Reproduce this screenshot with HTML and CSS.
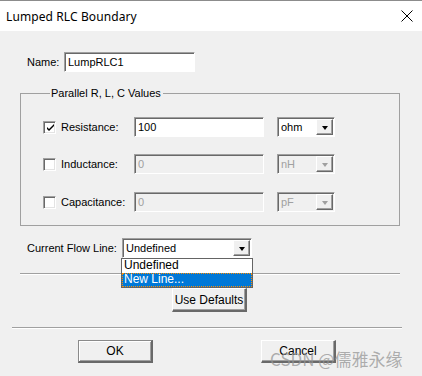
FILE: index.html
```html
<!DOCTYPE html>
<html>
<head>
<meta charset="utf-8">
<link rel="stylesheet" href="styles.css">
</head>
<body>
<div class="dialog">
  <div class="titlebar">
    <span class="title">Lumped RLC Boundary</span>
    <svg class="close" width="12" height="12" viewBox="0 0 12 12"><path d="M0.5 0.5 L11.5 11.5 M11.5 0.5 L0.5 11.5" stroke="#000" stroke-width="1" fill="none"/></svg>
  </div>
  <div class="content">
    <div class="name-row">
      <span class="name-label">Name:</span>
      <div class="field name-field">LumpRLC1</div>
    </div>
    <fieldset class="group">
      <legend>Parallel R, L, C Values</legend>
      <div class="vrow r1">
        <span class="cb checked"><svg width="9" height="9" viewBox="0 0 9 9"><path d="M1 4 L3 6 L8 1 L8 3 L3 8 L1 6 Z" fill="#000"/></svg></span>
        <span class="vlabel">Resistance:</span>
        <div class="field val">100</div>
        <div class="combo unit"><span class="ctext">ohm</span><span class="dbtn"><i class="tri"></i></span></div>
      </div>
      <div class="vrow r2">
        <span class="cb"></span>
        <span class="vlabel">Inductance:</span>
        <div class="field val disabled">0</div>
        <div class="combo unit disabled"><span class="ctext">nH</span><span class="dbtn"><i class="tri"></i></span></div>
      </div>
      <div class="vrow r3">
        <span class="cb"></span>
        <span class="vlabel">Capacitance:</span>
        <div class="field val disabled">0</div>
        <div class="combo unit disabled"><span class="ctext">pF</span><span class="dbtn"><i class="tri"></i></span></div>
      </div>
    </fieldset>
    <div class="flow-row">
      <span class="flow-label">Current Flow Line:</span>
      <div class="combo flow">
        <span class="ctext">Undefined</span><span class="dbtn"><i class="tri"></i></span>
        <div class="droplist">
          <div class="item">Undefined</div>
          <div class="item sel">New Line...</div>
        </div>
      </div>
    </div>
    <div class="sep sep1"></div>
    <div class="defaults-row"><button class="btn defaults">Use Defaults</button></div>
    <div class="sep sep2"></div>
    <div class="bottom-row">
      <button class="btn ok">OK</button>
      <button class="btn cancel">Cancel</button>
      <span class="watermark">CSDN @儒雅永缘</span>
    </div>
  </div>
</div>
</body>
</html>
```
FILE: styles.css
```css
* { box-sizing: border-box; }
html, body { margin: 0; padding: 0; }
body { width: 422px; height: 376px; overflow: hidden; background: #f0f0f0; }
.dialog { width: 422px; height: 376px; background: #f0f0f0; font-family: "Liberation Sans", Arial, sans-serif; font-size: 11px; color: #000; }
.titlebar { height: 31px; background: #fff; border-top: 1px solid #8c8c8c; display: flex; align-items: center; justify-content: space-between; padding: 0 9px 0 6px; }
.title { font-family: "Noto Sans", "Open Sans", sans-serif; font-size: 12px; color: #000; letter-spacing: 0.1px; }
.close { display: block; margin-top: 0; }
.content { position: relative; }
.name-row { display: flex; align-items: center; height: 20px; margin-top: 21px; padding-left: 27px; }
.name-label { width: 37px; }
.field { height: 20px; background: #fff; border-top: 1px solid #a0a0a0; border-left: 1px solid #a0a0a0; border-right: 1px solid #fff; border-bottom: 1px solid #fff; box-shadow: inset 1px 1px 0 #696969, 0 0 0 0 transparent; padding: 2px 0 0 3px; line-height: 15px; white-space: nowrap; overflow: hidden; }
.name-field { width: 131px; }
.group { margin: 14px 0 0 20px; width: 380px; border: 1px solid #a0a0a0; padding: 0 0 13px 22px; min-width: 0; }
.group legend { padding: 0 2px 0 1px; margin-left: 7px; line-height: 14px; height: 14px; }
.vrow { display: flex; align-items: center; height: 20px; }
.r1 { margin-top: 17px; }
.r2 { margin-top: 17px; }
.r3 { margin-top: 18px; }
.cb { width: 13px; height: 13px; background: #fff; border-top: 1px solid #a0a0a0; border-left: 1px solid #a0a0a0; border-right: 1px solid #fff; border-bottom: 1px solid #fff; box-shadow: inset 1px 1px 0 #696969, inset -1px -1px 0 #e3e3e3; display: flex; align-items: center; justify-content: center; }
.cb svg { display: block; margin: 1px 0 0 1px; }
.vlabel { margin-left: 5px; width: 73px; }
.val { width: 130px; }
.field.disabled { background: #f0f0f0; color: #a0a0a0; }
.combo { position: relative; height: 20px; background: #fff; border-top: 1px solid #a0a0a0; border-left: 1px solid #a0a0a0; border-right: 1px solid #fff; border-bottom: 1px solid #fff; box-shadow: inset 1px 1px 0 #696969; display: flex; align-items: stretch; }
.unit { width: 58px; margin-left: 13px; }
.combo .ctext { flex: 1; padding: 2px 0 0 3px; line-height: 15px; white-space: nowrap; }
.combo .dbtn { width: 17px; margin: 1px 1px 1px 0; background: #f0f0f0; border-top: 1px solid #fff; border-left: 1px solid #fff; border-right: 1px solid #696969; border-bottom: 1px solid #696969; box-shadow: inset -1px -1px 0 #a0a0a0; display: flex; align-items: center; justify-content: center; }
.tri { display: block; width: 0; height: 0; border-left: 3.5px solid transparent; border-right: 3.5px solid transparent; border-top: 4px solid #000; margin: 1px 0 0 0; }
.combo.disabled { background: #f0f0f0; color: #a0a0a0; }
.combo.disabled .tri { border-top-color: #a0a0a0; }
.flow-row { display: flex; align-items: center; height: 20px; margin-top: 12px; padding-left: 27px; }
.flow-label { width: 95px; }
.flow { width: 130px; }
.droplist { position: absolute; top: 19px; left: -2px; width: 132px; height: 30px; background: #fff; border: 1px solid #646464; z-index: 5; }
.item { height: 14px; line-height: 13px; padding-left: 2px; font-size: 12px; }
.item.sel { background: #0078d7; color: #fff; outline: 1px dotted #ff8c00; outline-offset: -1px; }
.sep { height: 2px; border-top: 1px solid #a0a0a0; border-bottom: 1px solid #fff; }
.sep1 { margin: 15px 0 0 20px; width: 380px; }
.defaults-row { display: flex; margin-top: 13px; padding-left: 172px; }
.btn { font-family: "Liberation Sans", Arial, sans-serif; font-size: 12px; color: #000; background: #f0f0f0; border-top: 1px solid #fff; border-left: 1px solid #fff; border-right: 2px solid #696969; border-bottom: 2px solid #696969; box-shadow: inset -1px -1px 0 #a0a0a0; padding: 0; margin: 0; border-radius: 0; }
.defaults { width: 75px; height: 24px; }
.sep2 { margin: 15px 0 0 12px; width: 390px; }
.bottom-row { position: relative; display: flex; margin-top: 11px; padding-left: 78px; }
.ok, .cancel { width: 75px; height: 23px; }
.ok { border-top: 1px solid #8a8a8a; border-left: 1px solid #8a8a8a; box-shadow: inset 1px 1px 0 #fff, inset -1px -1px 0 #a0a0a0; }
.cancel { margin-left: 108px; }
.watermark { position: absolute; left: 270px; top: 6px; font-family: "Noto Sans CJK SC", "Noto Sans", sans-serif; font-size: 17px; color: rgba(150,150,150,0.75); white-space: nowrap; pointer-events: none; }
```
